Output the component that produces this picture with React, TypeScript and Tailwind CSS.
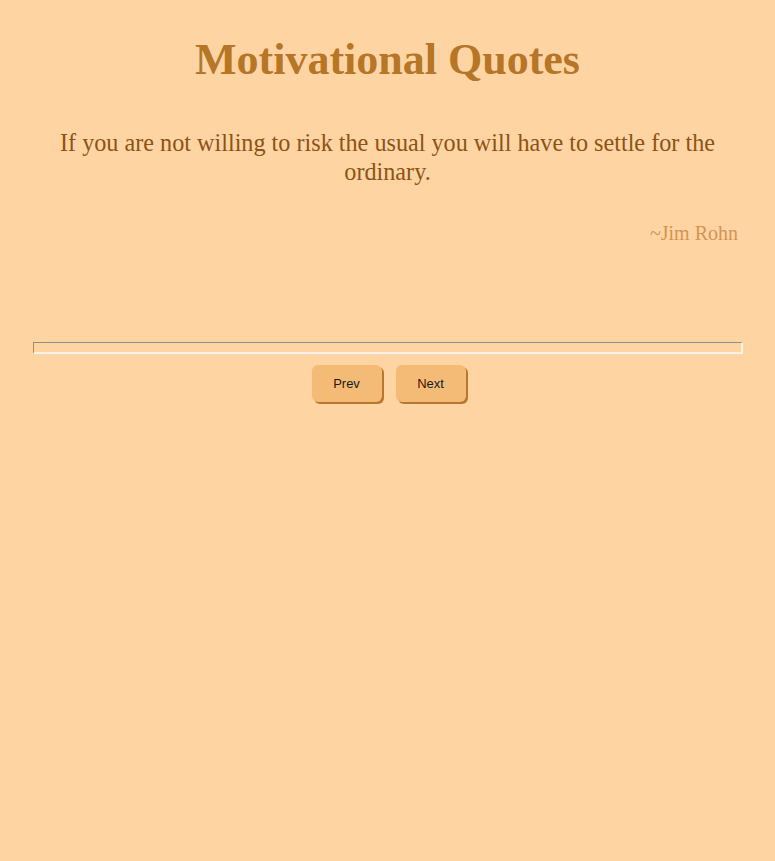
import React, { useState } from 'react';

const quotes = [
  { text: 'If you are not willing to risk the usual you will have to settle for the ordinary.', author: 'Jim Rohn' },
  { text: 'The only way to do great work is to love what you do.', author: 'Steve Jobs' },
];

export default function App() {
  const [idx, setIdx] = useState(0);
  const q = quotes[idx];

  return (
    <div className="min-h-[861px] bg-[#ffd4a3] px-[33px] pt-[34px]" style={{ fontFamily: '"Liberation Serif", serif' }}>
      <h1 className="text-center text-[44px] font-bold leading-[52px] text-[#b57628]">Motivational Quotes</h1>

      <p className="mx-auto mt-[42px] max-w-[700px] text-center text-[24.2px] leading-[29px] text-[#8a5417]" style={{ fontFamily: '"Palatino Linotype", "Book Antiqua", "Liberation Serif", serif' }}>
        {q.text}
      </p>

      <p className="mt-[34px] pr-[4px] text-right text-[20px] leading-[26px] text-[#d39453]">~{q.author}</p>

      {/* inset rule */}
      <div className="mt-[96px] mr-[-1px] h-[12px] border-solid border-t border-l border-b-2 border-r-2 border-t-[#8f8f8f] border-l-[#8f8f8f] border-b-[#f6f1ea] border-r-[#f6f1ea]" />

      <div className="mt-[11px] ml-[2px] flex justify-center gap-[14px]" style={{ fontFamily: '"Liberation Sans", Arial, sans-serif' }}>
        <button
          onClick={() => setIdx((idx - 1 + quotes.length) % quotes.length)}
          className="h-[37px] w-[70px] rounded-[6px] bg-[#f4bb77] text-[13px] text-[#1a1a1a] shadow-[2px_2px_0_#b8772f]"
        >
          Prev
        </button>
        <button
          onClick={() => setIdx((idx + 1) % quotes.length)}
          className="h-[37px] w-[70px] rounded-[6px] bg-[#f4bb77] text-[13px] text-[#1a1a1a] shadow-[2px_2px_0_#b8772f]"
        >
          Next
        </button>
      </div>
    </div>
  );
}
